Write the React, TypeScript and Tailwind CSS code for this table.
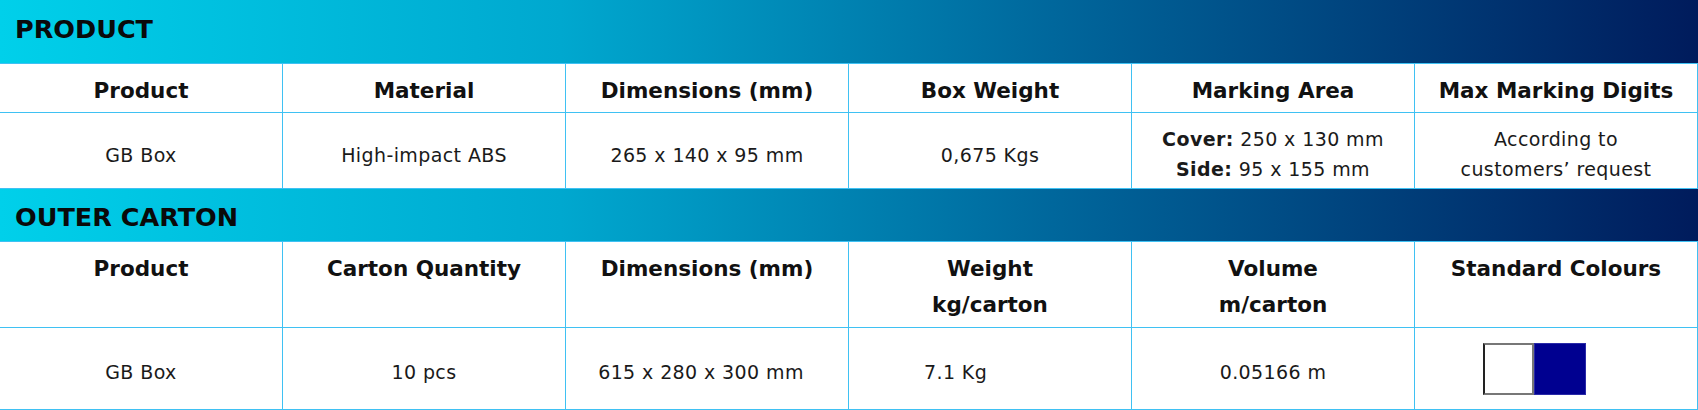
import React from 'react';

const productHead = ['Product', 'Material', 'Dimensions (mm)', 'Box Weight', 'Marking Area', 'Max Marking Digits'];
const cartonHead = [['Product'], ['Carton Quantity'], ['Dimensions (mm)'], ['Weight', 'kg/carton'], ['Volume', 'm/carton'], ['Standard Colours']];

function Band({ title, pad }: { title: string; pad: string }) {
  return (
    <div
      className={`h-[53px] border-b border-[#3fc1f3] bg-[linear-gradient(to_right,#00d0ea_0%,#00a8cf_33%,#00679c_62%,#003f7a_82%,#001b5c_100%)] pl-[15px] ${pad}`}
    >
      <h2 className="text-[25.5px] font-bold leading-none text-[#0a0a0a]">{title}</h2>
    </div>
  );
}

function Cell({ children, className = '' }: { children: React.ReactNode; className?: string }) {
  return <div className={`border-r border-[#3fc1f3] ${className}`}>{children}</div>;
}

export default function App() {
  return (
    <div className="w-[1698px] bg-white font-['DejaVu_Sans',sans-serif] text-[#111]">
      {/* product */}
      <div className="h-[64px] border-b border-[#3fc1f3] bg-[linear-gradient(to_right,#00d0ea_0%,#00a8cf_33%,#00679c_62%,#003f7a_82%,#001b5c_100%)] pl-[15px] pt-[17px]">
        <h2 className="text-[25.5px] font-bold leading-none text-[#0a0a0a]">PRODUCT</h2>
      </div>
      <div className="grid h-[49px] grid-cols-6 border-b border-[#3fc1f3]">
        {productHead.map((h) => (
          <Cell key={h} className="pt-[9px] text-center text-[21.5px] font-bold leading-[36px]">
            {h}
          </Cell>
        ))}
      </div>
      <div className="grid h-[76px] grid-cols-6 border-b border-[#3fc1f3] text-[19px] leading-[30px] tracking-[0.4px] text-[#1a1a1a]">
        <Cell className="flex items-center justify-center pt-[9px]">GB Box</Cell>
        <Cell className="flex items-center justify-center pt-[9px]">High-impact ABS</Cell>
        <Cell className="flex items-center justify-center pt-[9px]">265 x 140 x 95 mm</Cell>
        <Cell className="flex items-center justify-center pt-[9px]">0,675 Kgs</Cell>
        <Cell className="flex flex-col items-center justify-center pt-[7px]">
          <div>
            <b className="font-bold">Cover:</b> 250 x 130 mm
          </div>
          <div>
            <b className="font-bold">Side:</b> 95 x 155 mm
          </div>
        </Cell>
        <Cell className="flex flex-col items-center justify-center pt-[7px] text-center">
          <div>According to</div>
          <div>customers’ request</div>
        </Cell>
      </div>

      {/* outer carton */}
      <Band title="OUTER CARTON" pad="pt-[16px]" />
      <div className="grid h-[86px] grid-cols-6 border-b border-[#3fc1f3]">
        {cartonHead.map((lines) => (
          <Cell key={lines[0]} className="pt-[9px] text-center text-[21.5px] font-bold leading-[36px]">
            {lines.map((l) => (
              <div key={l}>{l}</div>
            ))}
          </Cell>
        ))}
      </div>
      <div className="grid h-[82px] grid-cols-6 border-b border-[#3fc1f3] text-[19px] leading-[30px] tracking-[0.4px] text-[#1a1a1a]">
        <Cell className="flex items-center justify-center pt-[6px]">GB Box</Cell>
        <Cell className="flex items-center justify-center pt-[6px]">10 pcs</Cell>
        <Cell className="flex items-center justify-center pt-[6px] pr-[12px]">615 x 280 x 300 mm</Cell>
        <Cell className="flex items-center pl-[75px] pt-[6px]">7.1 Kg</Cell>
        <Cell className="flex items-center justify-center pt-[6px]">0.05166 m</Cell>
        <Cell className="flex items-center pl-[68px]">
          <div className="h-[52px] w-[51px] border-2 border-[#777] border-l-[#222] bg-white" />
          <div className="h-[52px] w-[52px] border border-[#2a2aa8] bg-[#000090]" />
        </Cell>
      </div>
    </div>
  );
}
